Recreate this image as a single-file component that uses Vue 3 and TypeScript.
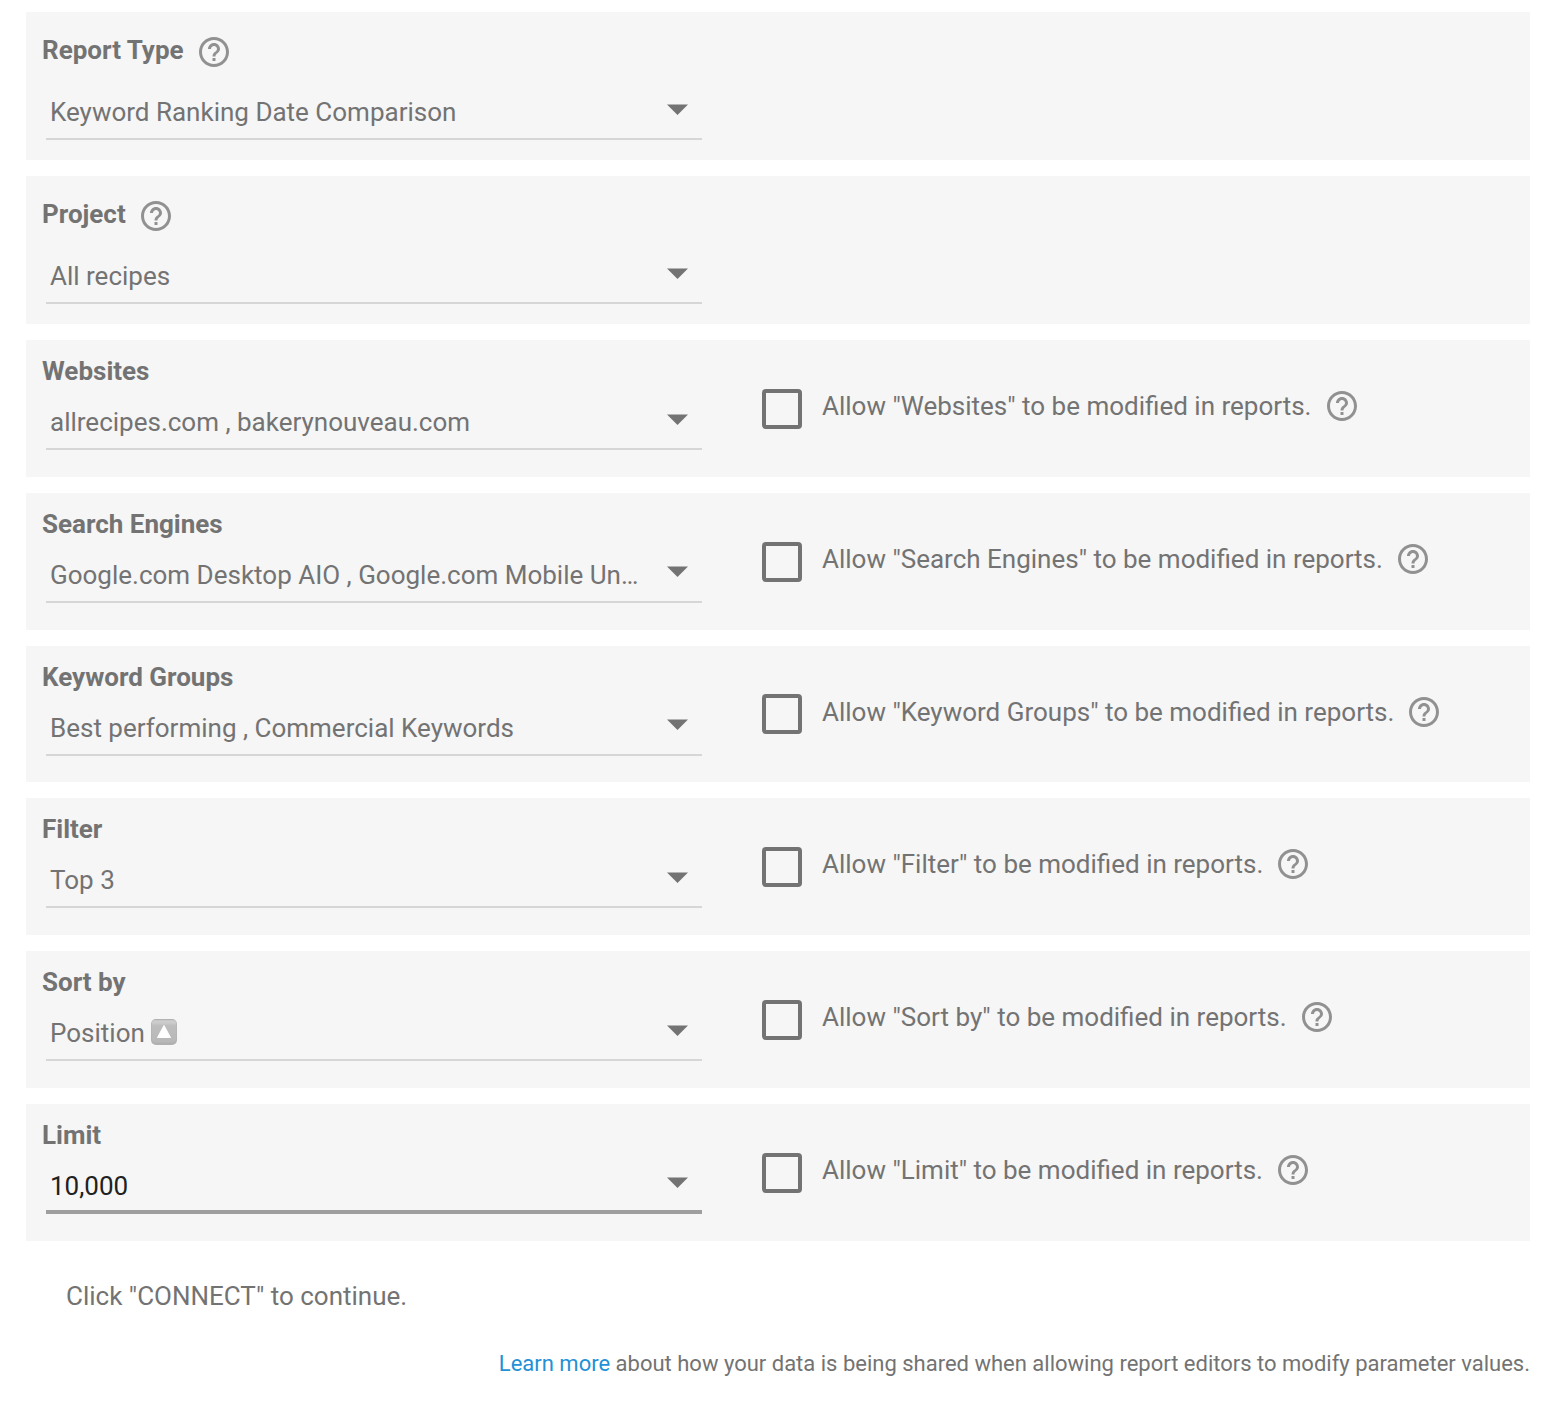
<script setup lang="ts">
import { ref } from 'vue'

interface Param {
  label: string
  value: string
  modifiable?: boolean
  ascending?: boolean
  focused?: boolean
}

const params = ref<Param[]>([
  { label: 'Report Type', value: 'Keyword Ranking Date Comparison' },
  { label: 'Project', value: 'All recipes' },
  { label: 'Websites', value: 'allrecipes.com , bakerynouveau.com', modifiable: true },
  { label: 'Search Engines', value: 'Google.com Desktop AIO , Google.com Mobile Un…', modifiable: true },
  { label: 'Keyword Groups', value: 'Best performing , Commercial Keywords', modifiable: true },
  { label: 'Filter', value: 'Top 3', modifiable: true },
  { label: 'Sort by', value: 'Position', modifiable: true, ascending: true },
  { label: 'Limit', value: '10,000', modifiable: true, focused: true },
])

const allowed = ref<Record<string, boolean>>({})
const toggle = (label: string) => {
  allowed.value[label] = !allowed.value[label]
}
</script>

<template>
  <main class="page">
    <section v-for="p in params" :key="p.label" class="param" :class="{ compact: p.modifiable }">
      <div class="field">
        <div class="label">
          <span>{{ p.label }}</span>
          <svg v-if="!p.modifiable" class="help" viewBox="2 2 20 20">
            <path d="M11 18h2v-2h-2v2zm1-16C6.480 2 2 6.480 2 12s4.480 10 10 10 10-4.480 10-10S17.520 2 12 2zm0 18c-4.410 0-8-3.590-8-8s3.590-8 8-8 8 3.590 8 8-3.590 8-8 8zm0-14c-2.210 0-4 1.790-4 4h2c0-1.100.9-2 2-2s2 .9 2 2c0 2-3 1.750-3 5h2c0-2.250 3-2.500 3-5 0-2.210-1.790-4-4-4z" />
          </svg>
        </div>
        <div class="select" :class="{ focused: p.focused }">
          <span class="value">{{ p.value }}</span>
          <svg v-if="p.ascending" class="sort" viewBox="0 0 26 26">
            <defs>
              <linearGradient id="key" x1="0" y1="0" x2="0" y2="1">
                <stop offset="0" stop-color="#b4b4b4" />
                <stop offset="0.06" stop-color="#cecece" />
                <stop offset="0.2" stop-color="#c8c8c8" />
                <stop offset="0.24" stop-color="#bebebe" />
                <stop offset="1" stop-color="#b8b8b8" />
              </linearGradient>
            </defs>
            <rect width="26" height="26" rx="5" fill="#b0b0b0" />
            <rect x="0.500" y="0.500" width="25" height="23" rx="4.500" fill="url(#key)" />
            <path d="M13 6.500L19.500 18.500h-13z" fill="#fff" stroke="#fff" stroke-linejoin="round" />
          </svg>
          <svg class="arrow" viewBox="0 0 42 22"><path d="M0 1h42L21 22z" /></svg>
        </div>
      </div>
      <div v-if="p.modifiable" class="allow">
        <button
          class="checkbox"
          :class="{ checked: allowed[p.label] }"
          role="checkbox"
          :aria-checked="!!allowed[p.label]"
          @click="toggle(p.label)"
        ></button>
        <span class="allow-text">Allow "{{ p.label }}" to be modified in reports.</span>
        <svg class="help" viewBox="2 2 20 20">
          <path d="M11 18h2v-2h-2v2zm1-16C6.480 2 2 6.480 2 12s4.480 10 10 10 10-4.480 10-10S17.520 2 12 2zm0 18c-4.410 0-8-3.590-8-8s3.590-8 8-8 8 3.590 8 8-3.590 8-8 8zm0-14c-2.210 0-4 1.790-4 4h2c0-1.100.9-2 2-2s2 .9 2 2c0 2-3 1.750-3 5h2c0-2.250 3-2.500 3-5 0-2.210-1.790-4-4-4z" />
        </svg>
      </div>
    </section>

    <p class="hint">Click "CONNECT" to continue.</p>
    <p class="footer"><a href="#">Learn more</a> about how your data is being shared when allowing report editors to modify parameter values.</p>
  </main>
</template>

<style>
body {
  background: #fff;
}
</style>

<style scoped>
.page {
  box-sizing: border-box;
  height: 1402px;
  padding: 12px 26px 0;
  overflow: hidden;
  font-family: Roboto, sans-serif;
  font-size: 26px;
  color: #737373;
}

.param {
  display: flex;
  box-sizing: border-box;
  height: 148px;
  margin-bottom: 16px;
  background: #f6f6f6;
}

.param.compact {
  height: 136.8px;
}

.field {
  width: 676px;
  margin-right: 60px;
}

.label {
  display: flex;
  align-items: center;
  gap: 15.4px;
  height: 32px;
  padding: 22px 0 0 16px;
  font-weight: 700;
  line-height: 32px;
}

.compact .label {
  padding-top: 15px;
}

.help {
  flex: none;
  width: 30px;
  height: 30px;
  fill: #919191;
}

.label .help {
  margin-top: 4px;
}

.select {
  display: flex;
  align-items: center;
  box-sizing: border-box;
  height: 54px;
  margin: 20px 0 0 20px;
  padding: 0 14px 0 4px;
  border-bottom: 2px solid #d6d6d6;
  white-space: nowrap;
}

.compact .select {
  margin-top: 9px;
}

.select.focused {
  padding-top: 2px;
  border-bottom: 4px solid #9e9e9e;
  color: #212121;
}

.sort {
  width: 26px;
  height: 26px;
  margin: -2px 0 0 6.4px;
}

.arrow {
  width: 21px;
  height: 11px;
  margin: 0 0 6px auto;
  fill: #737373;
}

.allow {
  display: flex;
  align-items: center;
  height: 40px;
  margin-top: 49px;
}

.checkbox {
  box-sizing: border-box;
  width: 40px;
  height: 40px;
  margin: -0.3px 0 0;
  padding: 0;
  border: 4px solid #737373;
  border-radius: 4px;
  background: transparent;
}

.checkbox.checked {
  background: #737373;
}

.allow-text {
  margin: -6px 15.1px 0 20px;
  line-height: 32px;
}

.allow .help {
  margin-top: -6px;
}

.hint {
  margin: 39px 0 0 40px;
  line-height: 32px;
}

.footer {
  margin: 38px 0 0;
  font-size: 22px;
  line-height: 28px;
  text-align: right;
  white-space: nowrap;
}

.footer a {
  color: #2490d6;
  text-decoration: none;
}
</style>
